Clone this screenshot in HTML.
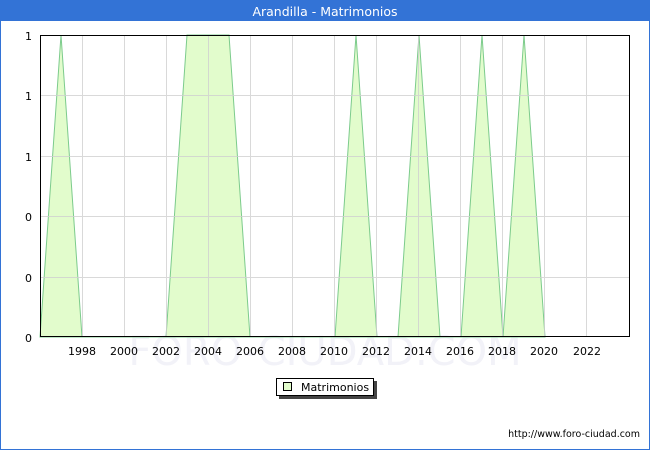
<!DOCTYPE html>
<html><head><style>
body{margin:0;width:650px;height:450px;overflow:hidden;background:#fff;font-family:"DejaVu Sans","Liberation Sans",sans-serif;}
</style></head><body>
<svg width="650" height="450" xmlns="http://www.w3.org/2000/svg" font-family="DejaVu Sans, Liberation Sans, sans-serif">
<rect x="0.5" y="0.5" width="649" height="449" fill="#fff" stroke="#3373d6"/>
<rect x="0" y="0" width="650" height="21" fill="#3373d6"/>
<text x="325" y="16" fill="#fff" font-size="12.5" text-anchor="middle">Arandilla - Matrimonios</text>
<text x="325" y="365" fill="#f2f2f8" font-size="40" text-anchor="middle">FORO-CIUDAD.COM</text>
<polygon fill="#e2fccc" stroke="#7ccb8c" stroke-width="1" points="40,337 61,35 82,337 166,337 187,35 229,35 250,337 335,337 356,35 377,337 398,337 419,35 440,337 461,337 482,35 503,337 524,35 545,337"/>
<g stroke="#d0d0d0" stroke-width="1" opacity="0.8">
<line x1="40" y1="95.5" x2="630" y2="95.5"/><line x1="40" y1="156.5" x2="630" y2="156.5"/><line x1="40" y1="216.5" x2="630" y2="216.5"/><line x1="40" y1="277.5" x2="630" y2="277.5"/>
<line x1="82.5" y1="35" x2="82.5" y2="337"/><line x1="124.5" y1="35" x2="124.5" y2="337"/><line x1="166.5" y1="35" x2="166.5" y2="337"/><line x1="208.5" y1="35" x2="208.5" y2="337"/><line x1="250.5" y1="35" x2="250.5" y2="337"/><line x1="292.5" y1="35" x2="292.5" y2="337"/><line x1="334.5" y1="35" x2="334.5" y2="337"/><line x1="376.5" y1="35" x2="376.5" y2="337"/><line x1="418.5" y1="35" x2="418.5" y2="337"/><line x1="460.5" y1="35" x2="460.5" y2="337"/><line x1="502.5" y1="35" x2="502.5" y2="337"/><line x1="544.5" y1="35" x2="544.5" y2="337"/><line x1="586.5" y1="35" x2="586.5" y2="337"/>
</g>
<rect x="40.5" y="35.5" width="589" height="301" fill="none" stroke="#000"/>
<g font-size="11" fill="#000" text-anchor="end">
<text x="32" y="40">1</text><text x="32" y="100">1</text><text x="32" y="161">1</text><text x="32" y="221">0</text><text x="32" y="282">0</text><text x="32" y="342">0</text>
</g>
<g font-size="11" fill="#000" text-anchor="middle">
<text x="82" y="355">1998</text><text x="124" y="355">2000</text><text x="166" y="355">2002</text><text x="208" y="355">2004</text><text x="250" y="355">2006</text><text x="292" y="355">2008</text><text x="334" y="355">2010</text><text x="376" y="355">2012</text><text x="418" y="355">2014</text><text x="460" y="355">2016</text><text x="502" y="355">2018</text><text x="544" y="355">2020</text><text x="587" y="355">2022</text>
</g>
<rect x="279" y="381" width="98" height="18" fill="#444"/>
<rect x="276.5" y="378.5" width="97" height="17" fill="#fff" stroke="#000"/>
<rect x="283.5" y="382.5" width="8" height="8" fill="#e2fccc" stroke="#000"/>
<text x="301" y="391" font-size="11">Matrimonios</text>
<text x="640" y="437" font-size="9.5" text-anchor="end">http://www.foro-ciudad.com</text>
</svg>
</body></html>
